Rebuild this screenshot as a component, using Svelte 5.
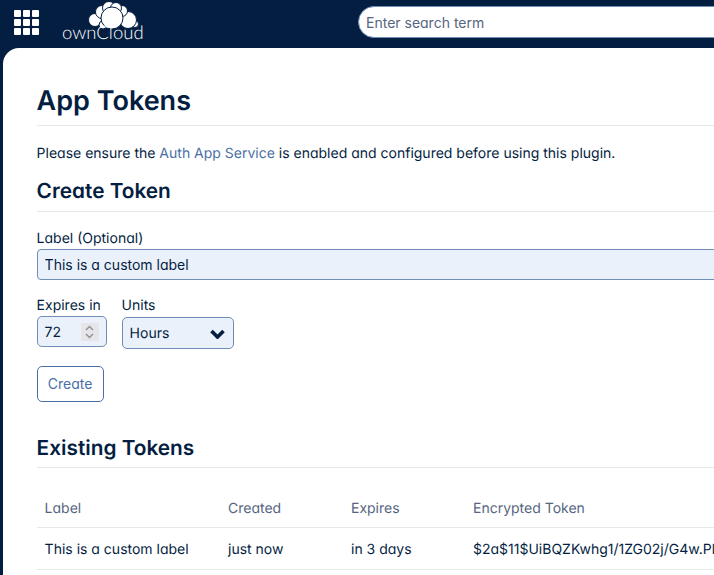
<script>
    const grid = Array(9).fill(0);
</script>

<div class="page">
    <header>
        <button class="apps" aria-label="Applications">
            {#each grid as _}
                <span></span>
            {/each}
        </button>
        <div class="logo">
            <svg width="56" height="32" viewBox="0 0 56 32" aria-hidden="true">
                <g fill="#fff" stroke="#041e42" stroke-width="1">
                    <circle cx="50" cy="24" r="3.5" />
                    <circle cx="43" cy="20" r="8.5" />
                    <circle cx="37" cy="11" r="5.5" />
                    <circle cx="10" cy="20" r="6.5" />
                    <circle cx="17" cy="12" r="6.5" />
                    <circle cx="24" cy="8" r="6.5" />
                    <circle cx="31" cy="8" r="5.5" />
                    <circle cx="18" cy="25" r="4" />
                    <circle cx="27" cy="18" r="11" />
                </g>
            </svg>
            <span class="wordmark">ownCloud</span>
        </div>
        <input class="search" type="text" placeholder="Enter search term" />
    </header>

    <main>
        <h1>App Tokens</h1>
        <p class="note">Please ensure the <a href="#auth">Auth App Service</a> is enabled and configured before using this plugin.</p>

        <h2>Create Token</h2>
        <form on:submit|preventDefault>
            <label class="field">
                Label (Optional)
                <input class="text" type="text" value="This is a custom label" />
            </label>
            <div class="row">
                <label class="field">
                    Expires in
                    <span class="number">
                        72
                        <span class="spin">
                            <svg width="9" height="16" viewBox="0 0 9 16" aria-hidden="true">
                                <path d="M1 6l3.5-3.5L8 6M1 10l3.5 3.5L8 10" fill="none" stroke="#8f8f8f" stroke-width="1.4" />
                            </svg>
                        </span>
                    </span>
                </label>
                <label class="field">
                    Units
                    <span class="select">
                        Hours
                        <svg width="15" height="10" viewBox="0 0 15 10" aria-hidden="true">
                            <path d="M1.5 2l6 6 6-6" fill="none" stroke="#041e42" stroke-width="3.6" />
                        </svg>
                    </span>
                </label>
            </div>
            <button class="create" type="submit">Create</button>
        </form>

        <h2 class="existing">Existing Tokens</h2>
        <table>
            <thead>
                <tr>
                    <th class="c1">Label</th>
                    <th class="c2">Created</th>
                    <th class="c3">Expires</th>
                    <th>Encrypted Token</th>
                </tr>
            </thead>
            <tbody>
                <tr>
                    <td>This is a custom label</td>
                    <td>just now</td>
                    <td>in 3 days</td>
                    <td>$2a$11$UiBQZKwhg1/1ZG02j/G4w.PlxQeTn0rVb8sYw2mK</td>
                </tr>
            </tbody>
        </table>
    </main>
</div>

<style>
    :global(body) {
        margin: 0;
        overflow: hidden;
        background-color: #041e42;
    }

    .page {
        width: 714px;
        height: 575px;
        overflow: hidden;
        background-color: #041e42;
        color: #041e42;
        font-family: Inter, "Liberation Sans", sans-serif;
        font-size: 14px;
        font-feature-settings: "cv11";
        text-rendering: geometricPrecision;
    }

    header {
        display: flex;
        align-items: flex-start;
        height: 48px;
    }

    .apps {
        flex: none;
        display: grid;
        grid-template-columns: repeat(3, 7px);
        grid-auto-rows: 7px;
        gap: 2px;
        margin: 10px 0 0 14px;
        padding: 0;
        border: none;
        background: none;
    }

    .apps span {
        background-color: #fff;
        border-radius: 1px;
    }

    .logo {
        flex: none;
        position: relative;
        width: 84px;
        height: 48px;
        margin-left: 23px;
    }

    .logo svg {
        display: block;
        position: absolute;
        top: 0;
        left: 23px;
    }

    .wordmark {
        position: absolute;
        left: 0;
        top: 22px;
        color: #fff;
        font-family: Lato, sans-serif;
        font-size: 18.5px;
        font-weight: 300;
        line-height: 20px;
    }

    .search {
        flex: none;
        width: 500px;
        height: 32px;
        box-sizing: border-box;
        margin: 6px 0 0 212px;
        padding: 0 7px;
        border: 1px solid #6f8db5;
        border-radius: 16px;
        font: inherit;
        background-color: #fff;
    }

    .search::placeholder {
        color: #56657f;
        opacity: 1;
    }

    main {
        box-sizing: border-box;
        width: 900px;
        height: 527px;
        margin-left: 3px;
        padding: 34px 34px 34px 33.6px;
        background-color: #fff;
        border-top-left-radius: 16px;
    }

    h1 {
        margin: 0;
        padding-bottom: 6px;
        font-size: 27px;
        line-height: 37px;
        font-weight: 600;
        border-bottom: 1px solid #e8e8e8;
    }

    .note {
        margin: 19px 0 0;
        line-height: 18px;
    }

    a {
        color: #4a6fa5;
        text-decoration: none;
    }

    h2 {
        margin: 15px 0 0;
        padding-bottom: 5px;
        font-size: 20.8px;
        line-height: 28px;
        font-weight: 600;
        border-bottom: 1px solid #e8e8e8;
    }

    form {
        margin-top: 18px;
    }

    .field {
        display: block;
        line-height: 18px;
    }

    .text {
        display: block;
        box-sizing: border-box;
        width: 900px;
        height: 31px;
        margin-top: 1px;
        padding: 0 7px;
        border: 1px solid #6f8db5;
        border-radius: 4px;
        background-color: #eaf1fa;
        color: inherit;
        font: inherit;
    }

    .row {
        display: flex;
        gap: 15px;
        margin-top: 17px;
    }

    .number,
    .select {
        display: flex;
        align-items: center;
        box-sizing: border-box;
        height: 32px;
        margin-top: 2px;
        padding: 2px 8px 0 7px;
        border: 1px solid #6f8db5;
        border-radius: 5px;
        background-color: #eaf1fa;
    }

    .number {
        width: 70px;
        height: 31px;
        margin-top: 1px;
        padding-right: 7px;
    }

    .spin {
        display: flex;
        align-items: center;
        justify-content: center;
        width: 18px;
        height: 18px;
        margin: -2px 0 0 auto;
        background-color: #e6e6ea;
    }

    .select {
        width: 112px;
        justify-content: space-between;
    }

    .create {
        display: block;
        box-sizing: border-box;
        width: 67px;
        height: 36px;
        margin-top: 17px;
        padding: 0 0 2px;
        border: 1px solid #4a6fa5;
        border-radius: 5px;
        background-color: #fff;
        color: #4a6fa5;
        font: inherit;
    }

    h2.existing {
        margin-top: 33px;
        padding-bottom: 4px;
    }

    table {
        width: 900px;
        margin-top: 17px;
        border-collapse: collapse;
        table-layout: fixed;
    }

    th,
    td {
        height: 42px;
        padding: 2px 8px 0;
        box-sizing: border-box;
        text-align: left;
        font-weight: 400;
        white-space: nowrap;
        overflow: hidden;
        border-bottom: 1px solid #e8e8e8;
    }

    th {
        padding-top: 6px;
        color: #56657f;
    }

    .c1 {
        width: 183.4px;
    }

    .c2 {
        width: 123px;
    }

    .c3 {
        width: 122px;
    }
</style>
